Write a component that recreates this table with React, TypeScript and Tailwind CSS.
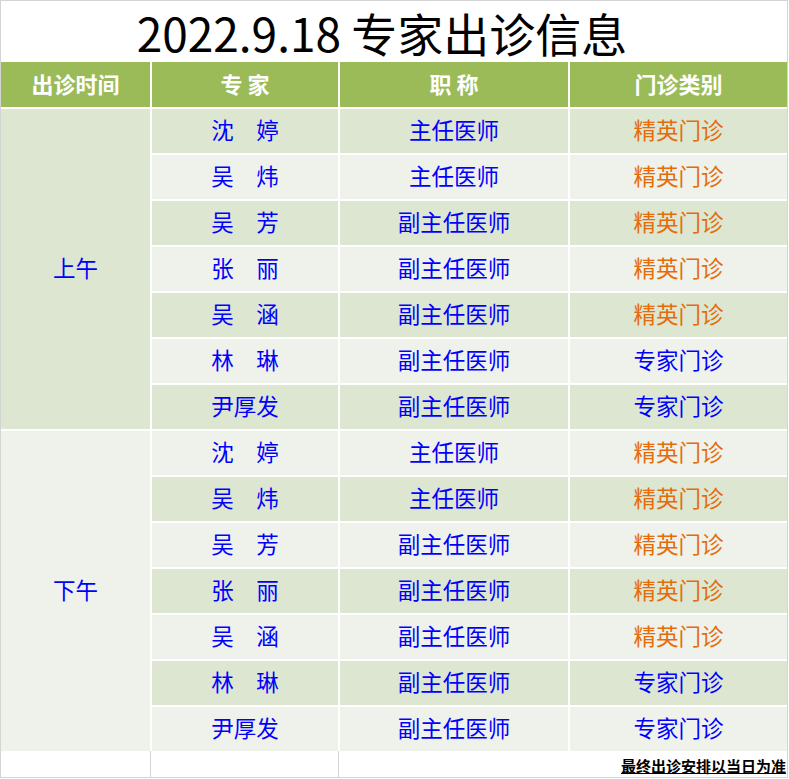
import React from 'react';

type Row = { name: string; title: string; kind: string };

const doctors: Row[] = [
    { name: '沈　婷', title: '主任医师', kind: '精英门诊' },
    { name: '吴　炜', title: '主任医师', kind: '精英门诊' },
    { name: '吴　芳', title: '副主任医师', kind: '精英门诊' },
    { name: '张　丽', title: '副主任医师', kind: '精英门诊' },
    { name: '吴　涵', title: '副主任医师', kind: '精英门诊' },
    { name: '林　琳', title: '副主任医师', kind: '专家门诊' },
    { name: '尹厚发', title: '副主任医师', kind: '专家门诊' },
];

const DARK = 'bg-[#dde6d1]';
const LIGHT = 'bg-[#eff2ea]';

const Cell = ({ children, bg, className = '' }: { children: React.ReactNode; bg: string; className?: string }) => (
    <div className={`${bg} flex items-center justify-center pb-[2px] ${className}`}>{children}</div>
);

const Session = ({ label, startDark }: { label: string; startDark: boolean }) => (
    <>
        <Cell bg={startDark ? DARK : LIGHT} className="row-span-7 text-[22.5px] text-[#0000ff]">
            {label}
        </Cell>
        {doctors.map((d, i) => {
            // stripes run across the whole sheet, so the session offset flips the pattern
            const dark = startDark ? i % 2 === 0 : i % 2 === 1;
            const bg = dark ? DARK : LIGHT;
            return (
                <React.Fragment key={label + i}>
                    <Cell bg={bg} className="text-[22.5px] text-[#0000ff]">{d.name}</Cell>
                    <Cell bg={bg} className="text-[22.5px] text-[#0000ff]">{d.title}</Cell>
                    <Cell
                        bg={bg}
                        className={`text-[22.5px] ${d.kind === '精英门诊' ? 'text-[#e46c0a]' : 'text-[#0000ff]'}`}
                    >
                        {d.kind}
                    </Cell>
                </React.Fragment>
            );
        })}
    </>
);

export default function App() {
    return (
        <div
            className="w-[789px] h-[779px] bg-white overflow-hidden"
            style={{ fontFamily: '"Noto Sans CJK SC", "Noto Sans", sans-serif' }}
        >
            <div className="w-[788px] h-[778px] border border-[#d4d4d4] flex flex-col">
                {/* title */}
                <div className="h-[61px] flex items-center justify-center pr-[24px] text-[46px] leading-none text-black">
                    2022.9.18 专家出诊信息
                </div>

                <div className="grid grid-cols-[149px_186px_228px_217px] grid-rows-[45px_repeat(14,44px)] gap-[2px] bg-white">
                    <Cell bg="bg-[#9bbb59]" className="text-[22px] font-bold text-white">出诊时间</Cell>
                    <Cell bg="bg-[#9bbb59]" className="text-[22px] font-bold text-white">专 家</Cell>
                    <Cell bg="bg-[#9bbb59]" className="text-[22px] font-bold text-white">职 称</Cell>
                    <Cell bg="bg-[#9bbb59]" className="text-[22px] font-bold text-white">门诊类别</Cell>

                    <Session label="上午" startDark={true} />
                    <Session label="下午" startDark={false} />
                </div>

                {/* footer row */}
                <div className="flex-1 flex">
                    <div className="w-[150px] border-r border-[#d4d4d4]" />
                    <div className="w-[188px] border-r border-[#d4d4d4]" />
                    <div className="flex-1 flex items-center justify-end pr-[1px] pt-[2px]">
                        <span className="text-[15px] font-bold underline leading-none text-black">最终出诊安排以当日为准</span>
                    </div>
                </div>
            </div>
        </div>
    );
}
